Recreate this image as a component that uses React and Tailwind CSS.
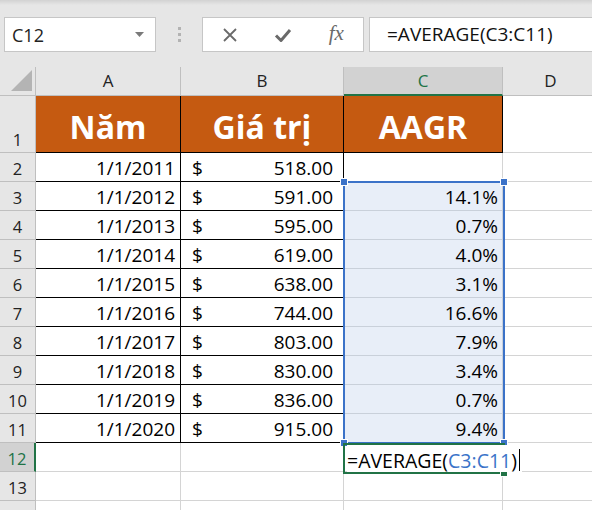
import React from "react";

const data = [
  { y: "1/1/2011", v: "518.00", p: "" },
  { y: "1/1/2012", v: "591.00", p: "14.1%" },
  { y: "1/1/2013", v: "595.00", p: "0.7%" },
  { y: "1/1/2014", v: "619.00", p: "4.0%" },
  { y: "1/1/2015", v: "638.00", p: "3.1%" },
  { y: "1/1/2016", v: "744.00", p: "16.6%" },
  { y: "1/1/2017", v: "803.00", p: "7.9%" },
  { y: "1/1/2018", v: "830.00", p: "3.4%" },
  { y: "1/1/2019", v: "836.00", p: "0.7%" },
  { y: "1/1/2020", v: "915.00", p: "9.4%" },
];

function RowHead({ n, active }) {
  return active ? (
    <div className="w-[36px] shrink-0 bg-[#d2d2d2] border-r-2 border-r-[#217346] border-b border-b-[#bfbfbf] flex items-end justify-center pb-[4px] text-[16.5px] leading-none text-[#217346]">
      {n}
    </div>
  ) : (
    <div className="w-[36px] shrink-0 bg-[#e6e6e6] border-r border-b border-[#bfbfbf] flex items-end justify-center pb-[4px] text-[16.5px] leading-none text-[#222]">
      {n}
    </div>
  );
}

function Handle({ className }) {
  return <div className={"absolute w-[6px] h-[6px] bg-[#3b72c8] outline outline-1 outline-white " + className} />;
}

export default function App() {
  return (
    <div className="w-[592px] h-[510px] overflow-hidden bg-[#e6e6e6] font-['Open_Sans',sans-serif] text-black">
      {/* toolbar */}
      <div className="h-[67px] relative overflow-hidden">
        <div className="h-[5px] bg-gradient-to-b from-[#d2d2d2] to-[#e6e6e6]" />
        <div className="flex pt-[12px] pl-[4px] h-[62px] w-[640px]">
          <div className="w-[152px] shrink-0 h-[35px] bg-white border border-[#c6c6c6] flex items-center justify-between pl-[7px] pr-[11px]">
            <span className="text-[18px] leading-none text-[#222]">C12</span>
            <svg width="9" height="5" viewBox="0 0 9 5">
              <path d="M0 0 L9 0 L4.5 5 Z" fill="#7a7a7a" />
            </svg>
          </div>
          <div className="w-[46px] shrink-0 h-[35px] flex flex-col items-center justify-center gap-[3px]">
            <div className="w-[3px] h-[3px] bg-[#b3b3b3]" />
            <div className="w-[3px] h-[3px] bg-[#b3b3b3]" />
            <div className="w-[3px] h-[3px] bg-[#b3b3b3]" />
          </div>
          <div className="w-[162px] shrink-0 h-[35px] bg-white border border-[#c6c6c6] grid grid-cols-3 items-center justify-items-center">
            <svg width="16" height="16" viewBox="0 0 16 16">
              <path d="M2 2 L14 14 M14 2 L2 14" stroke="#6a6a6a" strokeWidth="1.8" fill="none" />
            </svg>
            <svg width="18" height="16" viewBox="0 0 18 16">
              <path d="M2 8.5 L7 13.5 L16 3" stroke="#6a6a6a" strokeWidth="3" fill="none" strokeLinejoin="round" />
            </svg>
            <span className="font-['Liberation_Serif',serif] italic text-[21px] leading-none text-[#6a6a6a] pb-[2px]">fx</span>
          </div>
          <div className="ml-[5px] w-[260px] shrink-0 h-[35px] bg-white border border-[#c6c6c6] flex items-center pl-[17px]">
            <span className="text-[19px] leading-none text-[#111]">=AVERAGE(C3:C11)</span>
          </div>
        </div>
      </div>

      {/* grid */}
      <div className="relative w-[600px]">
        {/* column headers */}
        <div className="flex h-[29px]">
          <div className="w-[36px] shrink-0 bg-[#e6e6e6] border-r border-b border-[#bfbfbf] relative">
            <svg className="absolute right-[3px] bottom-[4px]" width="21" height="21" viewBox="0 0 21 21">
              <path d="M21 0 L21 21 L0 21 Z" fill="#b4b4b4" />
            </svg>
          </div>
          <div className="w-[145px] shrink-0 bg-[#e6e6e6] border-r border-b border-[#bfbfbf] flex items-end justify-center pb-[6px] text-[17px] leading-none text-[#222]">A</div>
          <div className="w-[163px] shrink-0 bg-[#e6e6e6] border-r border-b border-[#bfbfbf] flex items-end justify-center pb-[6px] text-[17px] leading-none text-[#222]">B</div>
          <div className="w-[159px] shrink-0 bg-[#d2d2d2] border-r border-r-[#bfbfbf] border-b-2 border-b-[#217346] flex items-end justify-center pb-[5px] text-[17px] leading-none text-[#217346]">C</div>
          <div className="w-[96px] shrink-0 bg-[#e6e6e6] border-r border-b border-[#bfbfbf] flex items-end justify-center pb-[6px] text-[17px] leading-none text-[#222]">D</div>
        </div>

        {/* row 1 */}
        <div className="flex h-[57px]">
          <RowHead n={1} />
          <div className="w-[145px] shrink-0 bg-[#c55a11] border-r border-b border-black flex items-end justify-center pb-[9px] text-white font-bold text-[32px] leading-none">Năm</div>
          <div className="w-[163px] shrink-0 bg-[#c55a11] border-r border-b border-black flex items-end justify-center pb-[9px] text-white font-bold text-[32px] leading-none">Giá trị</div>
          <div className="w-[159px] shrink-0 bg-[#c55a11] border-r border-b border-black flex items-end justify-center pb-[9px] text-white font-bold text-[32px] leading-none">AAGR</div>
          <div className="w-[96px] shrink-0 bg-white border-r border-b border-[#d4d4d4]" />
        </div>

        {data.map((r, i) => (
          <div key={i} className="flex h-[29px]">
            <RowHead n={i + 2} />
            <div className="w-[145px] shrink-0 bg-white border-r border-b border-black flex items-end justify-end pr-[5px] pb-[3px] text-[19px] leading-none">{r.y}</div>
            <div className="w-[163px] shrink-0 bg-white border-r border-b border-black flex items-end justify-between pl-[11px] pr-[10px] pb-[3px] text-[19px] leading-none">
              <span>$</span>
              <span>{r.v}</span>
            </div>
            {i === 0 ? (
              <div className="w-[159px] shrink-0 bg-white border-r border-b border-r-[#d4d4d4] border-b-black" />
            ) : (
              <div className="w-[159px] shrink-0 bg-[#e8eef8] border-r border-b border-[#c9d0da] flex items-end justify-end pr-[4px] pb-[3px] text-[19px] leading-none">{r.p}</div>
            )}
            <div className="w-[96px] shrink-0 bg-white border-r border-b border-[#d4d4d4]" />
          </div>
        ))}

        {[12, 13].map((n) => (
          <div key={n} className="flex h-[29px]">
            <RowHead n={n} active={n === 12} />
            <div className="w-[145px] shrink-0 bg-white border-r border-b border-[#d4d4d4]" />
            <div className="w-[163px] shrink-0 bg-white border-r border-b border-[#d4d4d4]" />
            <div className="w-[159px] shrink-0 bg-white border-r border-b border-[#d4d4d4]" />
            <div className="w-[96px] shrink-0 bg-white border-r border-b border-[#d4d4d4]" />
          </div>
        ))}
        <div className="flex h-[29px]">
          <div className="w-[36px] shrink-0 bg-[#e6e6e6] border-r border-b border-[#bfbfbf]" />
          <div className="w-[145px] shrink-0 bg-white border-r border-b border-[#d4d4d4]" />
          <div className="w-[163px] shrink-0 bg-white border-r border-b border-[#d4d4d4]" />
          <div className="w-[159px] shrink-0 bg-white border-r border-b border-[#d4d4d4]" />
          <div className="w-[96px] shrink-0 bg-white border-r border-b border-[#d4d4d4]" />
        </div>

        {/* selection C3:C11 */}
        <div className="absolute left-[343px] top-[114px] w-[162px] h-[263px] border-2 border-[#3b72c8]">
          <Handle className="-left-[4px] -top-[4px]" />
          <Handle className="-right-[4px] -top-[4px]" />
          <Handle className="-left-[4px] -bottom-[4px]" />
          <Handle className="-right-[4px] -bottom-[4px]" />
        </div>

        {/* active cell C12 */}
        <div className="absolute left-[343px] top-[376px] w-[162px] h-[31px] border-2 border-[#217346]">
          <div className="absolute -right-[4px] -bottom-[4px] w-[6px] h-[6px] bg-[#217346] outline outline-1 outline-white" />
          <div className="absolute left-[2px] top-[0px] h-[27px] pb-[2px] pr-[2px] flex items-end bg-white text-[19.5px] leading-none whitespace-nowrap">
            <span>=AVERAGE(</span>
            <span className="text-[#3b74c9]">C3:C11</span>
            <span>)</span>
            <span className="ml-[2px] mb-[-1px] w-[1px] h-[22px] bg-black" />
          </div>
        </div>
      </div>
    </div>
  );
}
